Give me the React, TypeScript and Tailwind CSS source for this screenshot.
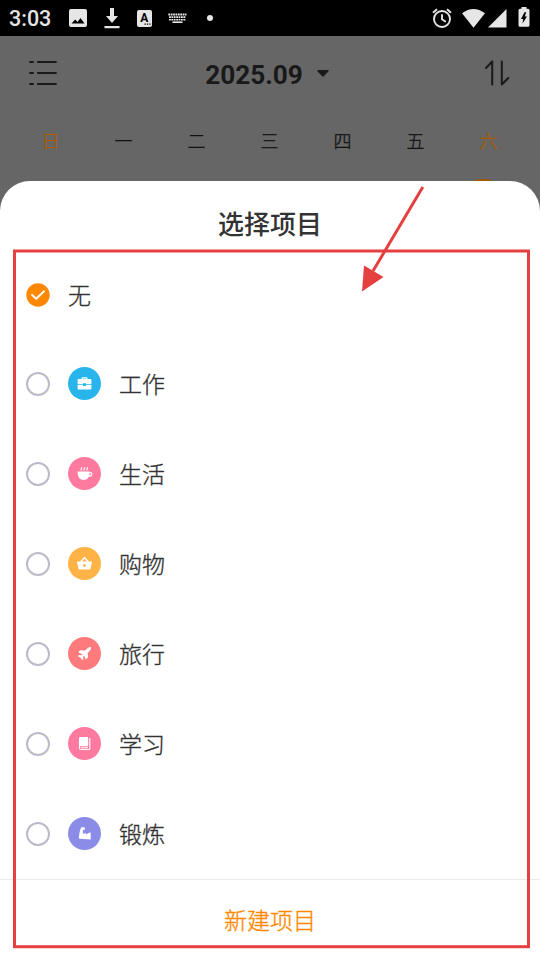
import type { ReactNode } from 'react'

type Project = {
  name: string
  color: string
  icon: ReactNode
}

const weekdays = ['日', '一', '二', '三', '四', '五', '六']

const projects: Project[] = [
  { name: '工作', color: 'bg-[#28b5ec]', icon: <BriefcaseIcon /> },
  { name: '生活', color: 'bg-[#ff7a9e]', icon: <CupIcon /> },
  { name: '购物', color: 'bg-[#ffb246]', icon: <BasketIcon /> },
  { name: '旅行', color: 'bg-[#ff7a7c]', icon: <PlaneIcon /> },
  { name: '学习', color: 'bg-[#ff7a9e]', icon: <BookIcon /> },
  { name: '锻炼', color: 'bg-[#8b8be8]', icon: <MuscleIcon /> },
]

export default function App() {
  return (
    <div className="relative flex h-[960px] w-[540px] flex-col overflow-hidden bg-[#666666] font-['Roboto','Noto_Sans_CJK_SC',sans-serif]">
      <StatusBar />

      {/* Calendar header */}
      <header className="flex h-[74px] shrink-0 items-center justify-between pr-[30px] pl-[29px]">
        <svg width="28" height="26" viewBox="0 0 28 26" stroke="#191919" strokeWidth="2.2" strokeLinecap="round">
          <path d="M1.2 2H4M9 2h17.800M1.200 13H4M9 13h17.800M1.200 24H4M9 24h17.800" />
        </svg>
        <div className="flex items-center gap-[14px] pt-[3px] pr-[8px]">
          <span className="text-[26.200px] leading-8 font-bold text-[#191919]">2025.09</span>
          <svg width="12" height="7" viewBox="0 0 12 7" className="mb-[3px]" fill="#191919">
            <path d="M1 0h10q1.300.3.500 1.300L7 6q-1 1-2 0L.5 1.300Q-.3.300 1 0Z" />
          </svg>
        </div>
        <svg width="25" height="26" viewBox="0 0 25 26" fill="none" stroke="#191919" strokeWidth="2" strokeLinecap="round" strokeLinejoin="round">
          <path d="M1 8L7.200 1.500V24.500M16.800 1.500V24.500L23.300 18" />
        </svg>
      </header>

      <div className="grid shrink-0 grid-cols-7 pt-[19px] pr-[15px] pl-[14px] text-center text-[18px] leading-[26px] font-light text-[#111111] [-webkit-text-stroke:0.3px]">
        {weekdays.map((day, i) => (
          <span key={day} className={i === 0 || i === 6 ? 'text-[#ab5b00]' : ''}>
            {day}
          </span>
        ))}
      </div>

      {/* Selected day, mostly hidden under the sheet */}
      <div className="absolute top-[178.500px] left-[457px] size-[52px] rounded-full bg-[#a35700]" />

      {/* Bottom sheet */}
      <section className="relative mt-[26px] flex flex-1 flex-col rounded-t-[30px] bg-white text-[#333333]">
        <h1 className="h-[68px] pt-[25px] text-center text-[26px] leading-[38px] font-medium">选择项目</h1>

        <ul className="flex flex-col">
          <li className="flex h-[90px] items-center gap-[18px] pt-[2px] pl-[26px]">
            <CheckedRadio />
            <span className="pt-[4px] text-[23px] font-light [-webkit-text-stroke:0.35px]">无</span>
          </li>
          {projects.map((project) => (
            <ProjectRow key={project.name} {...project} />
          ))}
        </ul>

        <button className="flex-1 border-t border-[#ebebeb] pt-[4px] text-[23px] font-light text-[#ff8800] [-webkit-text-stroke:0.35px]">新建项目</button>
      </section>

      {/* Markup drawn over the screen */}
      <svg className="absolute inset-0" width="540" height="960" viewBox="0 0 540 960" fill="none">
        <rect x="14.500" y="251" width="514" height="695.700" stroke="#e53f40" strokeWidth="3" />
        <path d="M422.800 187L373 271" stroke="#e53f40" strokeWidth="3" />
        <path d="M362 291.500L364 265.500L383.500 277Z" fill="#e53f40" />
      </svg>
    </div>
  )
}

function StatusBar() {
  return (
    <div className="flex h-9 shrink-0 items-center justify-between bg-black pr-[10px] pl-[9px] text-[#e6e6e6]">
      <div className="flex items-center">
        <span className="w-[60px] pt-[2px] text-[21.500px] leading-9 font-medium">3:03</span>
        {/* image */}
        <svg width="18" height="18" viewBox="0 0 18 18" fill="currentColor">
          <path fillRule="evenodd" d="M2 0h14a2 2 0 0 1 2 2v14a2 2 0 0 1-2 2H2a2 2 0 0 1-2-2V2a2 2 0 0 1 2-2Zm.5 14.500h13L11.500 9l-3 4-2.300-2.600Z" />
        </svg>
        {/* download */}
        <svg className="ml-[17px]" width="16" height="22" viewBox="0 0 16 22" fill="currentColor">
          <path d="M6 1h4v8h4l-6 7-6-7h4ZM.5 19h15v2.200H.5Z" />
        </svg>
        {/* input language */}
        <span className="ml-[17px] flex h-[17px] w-[15px] items-start justify-center rounded-xs bg-[#e6e6e6]">
          <svg width="15" height="17" viewBox="0 0 15 17" fill="#000">
            <text x="3.200" y="12" fontSize="12" fontWeight="700" fontFamily="Roboto, sans-serif">A</text>
            <path d="M7.500 13.500h1.300v1.300H7.500Zm2.400 0h1.300v1.300H9.900Zm2.400 0h1.300v1.300h-1.300Z" />
          </svg>
        </span>
        {/* keyboard */}
        <svg className="ml-4" width="19" height="11" viewBox="0 0 19 11" fill="none" stroke="currentColor">
          <path d="M.3 1.500H18.500" strokeWidth="1.800" strokeDasharray="1.800 .6" />
          <path d="M1 4.200H18" strokeWidth="1.800" strokeDasharray="1.800 .6" />
          <path d="M1 6.800H18" strokeWidth="1.600" strokeDasharray="1.800 .6" />
          <path d="M4.500 9.200h10" strokeWidth="1.600" />
        </svg>
        <span className="ml-[20px] size-[6px] rounded-full bg-[#e6e6e6]" />
      </div>

      <div className="flex items-center">
        {/* alarm */}
        <svg width="20" height="20" viewBox="0 0 20 20" fill="none" stroke="currentColor" strokeWidth="1.900">
          <circle cx="10" cy="11" r="8" />
          <path d="M1 4.800L5 1.200M19 4.800L15 1.200M10 6.300V11.300L13.800 13.800" />
        </svg>
        <svg className="ml-[10px]" width="23" height="19" viewBox="0 0 23 19" fill="currentColor">
          <path d="M0 4.300Q11.500-4.300 23 4.300L11.500 18.800Z" />
        </svg>
        <svg className="ml-[3px]" width="19" height="19" viewBox="0 0 19 19" fill="currentColor">
          <path d="M0 18.500L18.500 0V18.500Z" />
        </svg>
        {/* battery */}
        <svg className="ml-[11px] mb-[2px]" width="12" height="20" viewBox="0 0 12 20" fill="currentColor">
          <path fillRule="evenodd" d="M3.500 0h5v1.800h1.500q1.500 0 1.500 1.500v15q0 1.500-1.500 1.500H2Q.5 19.800.5 18.300v-15q0-1.500 1.500-1.500h1.500ZM6.500 5.200L3 12h2.200L4.500 16.500 9 9.600H6.800L8.200 5.200Z" />
        </svg>
      </div>
    </div>
  )
}

function ProjectRow({ name, color, icon }: Project) {
  return (
    <li className="flex h-[90px] items-center pl-[26px]">
      <span className="size-[24px] rounded-full border-2 border-[#bbbac9]" />
      <span className={`ml-[18px] mb-px flex size-[33px] items-center justify-center rounded-full text-white ${color}`}>
        {icon}
      </span>
      <span className="ml-[18px] pt-[4px] text-[23px] font-light [-webkit-text-stroke:0.35px]">{name}</span>
    </li>
  )
}

function CheckedRadio() {
  return (
    <svg width="24" height="24" viewBox="0 0 24 24" fill="none">
      <circle cx="12" cy="12" r="11.700" fill="#ff8800" />
      <path d="M6 11.800L10.200 15.800L18 8.300" stroke="#fff" strokeWidth="1.900" strokeLinecap="round" strokeLinejoin="round" />
    </svg>
  )
}

function BriefcaseIcon() {
  return (
    <svg width="17" height="17" viewBox="0 0 17 17" fill="currentColor">
      <path fillRule="evenodd" d="M5.500 4V3.200Q5.500 2.300 6.400 2.300h4.200q.9 0 .9.900V4h3q.9 0 .9.900v4.300H10V8.200H7v1H1.600V4.900q0-.9.900-.9ZM6.700 4h3.600v-.6H6.700Z" />
      <path d="M1.600 10.100H7v.9h3v-.9h5.400v3.400q0 .9-.9.900h-12q-.9 0-.9-.9Z" />
    </svg>
  )
}

function CupIcon() {
  return (
    <svg width="17" height="17" viewBox="0 0 17 17" fill="none" stroke="currentColor">
      <path d="M1.500 6.500H13.700Q13.700 15 7.700 15Q1.500 15 1.500 6.500Z" fill="currentColor" stroke="none" />
      <path d="M13 7.800q3-.6 2.900 1.300-.2 2.200-3.500 2" strokeWidth="1.200" />
      <path d="M5.300 5.500q-.6-.9 0-1.600.5-.8.200-1.600M8.200 5.500q-.6-.9 0-1.600.5-.8.200-1.600M11.100 5.500q-.6-.9 0-1.600.5-.8.200-1.600" strokeWidth="1.200" />
    </svg>
  )
}

function BasketIcon() {
  return (
    <svg width="17" height="17" viewBox="0 0 17 17" fill="currentColor">
      <path fillRule="evenodd" d="M1.500 6.500H4L8.500 1.600l4.500 4.900h2.500q.6 0 .5.600l-1.500 6.600q-.2.900-1 .9h-10q-.8 0-1-.9L1 7.100q-.1-.6.500-.6Zm4.600 0h4.800L8.500 3.800Zm2.400 2.600a1.400 1.400 0 1 0 0 2.800 1.400 1.400 0 0 0 0-2.800Z" />
    </svg>
  )
}

function PlaneIcon() {
  return (
    <svg width="17" height="17" viewBox="0 0 17 17" fill="currentColor">
      <path d="M14.900 2q.6 1.700-.7 3.200l-2.500 2.800.3 4.300-2.100 2.100-1.900-3.600-1 .9.500 2.200-1.400 1.400-1.500-2.600-2.700-1.400 1.300-1.400 2.300.4 1-.9-4.100-2L3.900 5.300l5.100.1 2.800-2.500q1.500-1.200 3.100-.9Z" />
    </svg>
  )
}

function BookIcon() {
  return (
    <svg width="17" height="17" viewBox="0 0 17 17" fill="none" stroke="currentColor">
      <path d="M4.500 2H11q1.200 0 1.200 1v8.300H3v-8q0-1.300 1.500-1.300Z" fill="currentColor" stroke="none" />
      <path d="M3.500 3.500V13q0 1.500 1.500 1.500h7.700q1.100 0 1.100-1V3M5 12.800h7" strokeWidth="1.100" />
    </svg>
  )
}

function MuscleIcon() {
  return (
    <svg width="17" height="17" viewBox="0 0 17 17" fill="currentColor">
      <path d="M5.200 2.200H8q1.400.3.900 1.700L8.200 5H6.900v3.800q2.500-1.400 3.900.4 1.200-1.500 3.900-1.700v7L4 13.800q-1.300-.1-1.200-1.300Q3.200 6.700 5.200 2.200Z" />
    </svg>
  )
}
